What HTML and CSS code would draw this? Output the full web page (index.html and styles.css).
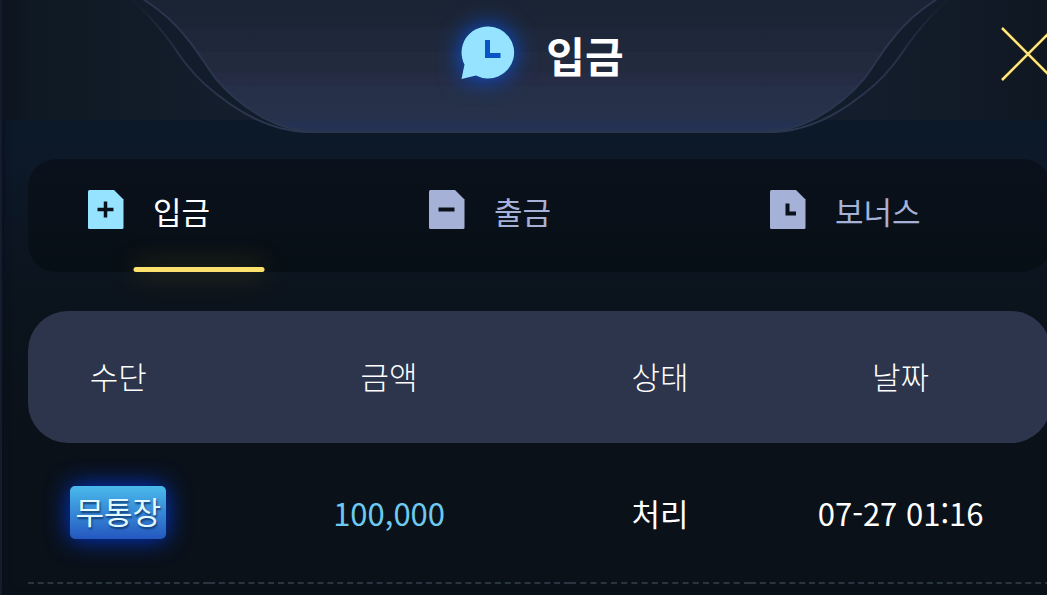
FILE: index.html
```html
<!DOCTYPE html>
<html lang="ko">
<head>
<meta charset="utf-8">
<title>입금</title>
<link rel="stylesheet" href="styles.css">
</head>
<body>
<main class="modal">
  <header class="modal-header">
    <svg class="header-plate" width="820" height="134" viewBox="0 0 820 134" aria-hidden="true">
      <defs>
        <linearGradient id="plate" x1="0" y1="0" x2="0" y2="134" gradientUnits="userSpaceOnUse">
          <stop offset="0" stop-color="#1b2435"/>
          <stop offset=".21" stop-color="#1c2536"/>
          <stop offset=".21" stop-color="#1e273a"/>
          <stop offset=".385" stop-color="#1f283b"/>
          <stop offset=".39" stop-color="#222a3e"/>
          <stop offset=".54" stop-color="#222a3e"/>
          <stop offset=".545" stop-color="#252b43"/>
          <stop offset=".64" stop-color="#252c45"/>
          <stop offset=".645" stop-color="#252f47"/>
          <stop offset=".78" stop-color="#263048"/>
          <stop offset=".785" stop-color="#273149"/>
          <stop offset=".89" stop-color="#27314b"/>
          <stop offset=".93" stop-color="#253154"/>
          <stop offset="1" stop-color="#273453"/>
        </linearGradient>
        <linearGradient id="rim" x1="0" y1="0" x2="0" y2="134" gradientUnits="userSpaceOnUse">
          <stop offset="0" stop-color="#253145" stop-opacity=".1"/>
          <stop offset=".4" stop-color="#253145"/>
          <stop offset="1" stop-color="#2b3852"/>
        </linearGradient>
      </defs>
      <path d="M0 -1C12 8 24 21 35 35C46 49 50 57 57 65C66 77 77 88 100 104C123 120 148 131 176 132H644C672 131 697 120 720 104C743 88 754 77 763 65C770 57 774 49 785 35C796 21 808 8 820 -1Z" fill="#131c2b" stroke="url(#rim)" stroke-width="2"/>
      <path d="M13 -1C30 10 44 22 55 36C69 52 77 68 86 79C98 93 114 107 134 118C151 127 166 131 184 132H636C654 131 669 127 686 118C706 107 722 93 734 79C743 68 751 52 765 36C776 22 790 10 807 -1Z" fill="url(#plate)" stroke="#29364e" stroke-width="2"/>
    </svg>
    <div class="title">
      <svg class="title-icon" width="54" height="54" viewBox="0 0 54 54" aria-hidden="true">
        <path d="M27.500 .5A26 26 0 1 1 15 49.500L.5 53L3.500 38.500A26 26 0 0 1 27.500 .5Z" fill="#96e3ff"/>
        <path d="M24 14H29V27H39.500V32H24Z" fill="#0755c4"/>
      </svg>
      <h1>입금</h1>
    </div>
    <button class="close" type="button" aria-label="닫기">
      <svg width="54" height="54" viewBox="0 0 54 54" aria-hidden="true">
        <path d="M1 1L53 53M53 1L1 53" stroke="#1b1b13" stroke-width="5"/>
        <path d="M1 1L53 53M53 1L1 53" stroke="#ffe680" stroke-width="2.500"/>
      </svg>
    </button>
  </header>
  <div class="modal-body">
    <nav class="tabs">
      <button class="tab active" type="button">
        <svg width="36" height="39" viewBox="0 0 36 39" aria-hidden="true">
          <path d="M1.500 0H26L35.500 9.500V37.500Q35.500 39 34 39H1.500Q0 39 0 37.500V1.500Q0 0 1.500 0Z" fill="currentColor"/>
          <path d="M9.500 19.500H25.500M17.500 11.500V27.500" stroke="#09111b" stroke-width="3.500"/>
        </svg>
        <span>입금</span>
      </button>
      <button class="tab" type="button">
        <svg width="36" height="39" viewBox="0 0 36 39" aria-hidden="true">
          <path d="M1.500 0H26L35.500 9.500V37.500Q35.500 39 34 39H1.500Q0 39 0 37.500V1.500Q0 0 1.500 0Z" fill="currentColor"/>
          <path d="M9.500 19.500H25.500" stroke="#09111b" stroke-width="4"/>
        </svg>
        <span>출금</span>
      </button>
      <button class="tab" type="button">
        <svg width="36" height="39" viewBox="0 0 36 39" aria-hidden="true">
          <path d="M1.500 0H26L35.500 9.500V37.500Q35.500 39 34 39H1.500Q0 39 0 37.500V1.500Q0 0 1.500 0Z" fill="currentColor"/>
          <path d="M17.500 13.500V23.500H26" fill="none" stroke="#09111b" stroke-width="4"/>
        </svg>
        <span>보너스</span>
      </button>
    </nav>
    <table class="history">
      <thead>
        <tr><th class="c3">수단</th><th class="c6">금액</th><th class="c3">상태</th><th class="c5">날짜</th></tr>
      </thead>
      <tbody>
        <tr><td><span class="badge">무통장</span></td><td class="amount">100,000</td><td>처리</td><td>07-27 01:16</td></tr>
      </tbody>
    </table>
  </div>
</main>
</body>
</html>
```
FILE: styles.css
```css
* { box-sizing: border-box; }

html, body {
  margin: 0;
  min-height: 100%;
  overflow: hidden;
  background: #0a1119;
}

body {
  font-family: "Noto Sans CJK KR", sans-serif;
  font-size: 31px;
  color: #fff;
}

button {
  border: 0;
  padding: 0;
  background: none;
  font: inherit;
  color: inherit;
  cursor: pointer;
}

.modal {
  margin-right: -32px;
  min-height: 100vh;
  box-shadow: inset 2px 0 #151c2d, inset 5px 0 6px #0a121e;
  background: linear-gradient(#0c1929 120px, #0d1929 155px, #0b131c 300px, #0a1119 450px);
}

.modal-header {
  position: relative;
  display: flex;
  justify-content: center;
  height: 120px;
  background: linear-gradient(90deg, #151c2d 2px, #0d141f 2px, #0f1923 30px, #131d2b 200px, #131d2b 880px, #0f1722 1050px);
}

.header-plate {
  position: absolute;
  top: 0;
  left: 50%;
  transform: translateX(-50%);
}

.title {
  position: relative;
  display: flex;
  align-items: flex-start;
  gap: 31px;
  padding: 26px 0 0 6px;
}

.title-icon {
  overflow: visible;
  filter: drop-shadow(0 0 12px #0755e8);
}

h1 {
  margin: 0;
  font-size: 42px;
  font-weight: 700;
  line-height: 58px;
}

.close {
  position: absolute;
  top: 27px;
  right: 24px;
  width: 54px;
  height: 54px;
}

.close svg { display: block; }

.modal-body { padding: 39px 28px 0; }

.tabs {
  display: grid;
  grid-template-columns: repeat(3, 1fr);
  height: 113px;
  margin-bottom: 39px;
  border-radius: 28px;
  background: linear-gradient(#0a111c, #070f16);
}

.tab {
  position: relative;
  display: flex;
  align-items: flex-start;
  gap: 29px;
  padding: 31px 0 0 60px;
  color: #a5b1d6;
  line-height: 42px;
}

.tab.active { color: #96e3ff; }
.tab.active span { color: #fff; }

.tab.active::after {
  content: "";
  position: absolute;
  bottom: 0;
  left: 50%;
  width: 131px;
  height: 5px;
  border-radius: 3px;
  background: #ffe26e;
  box-shadow: 0 0 28px #ffc80060;
  transform: translateX(-50%);
}

.history {
  width: 100%;
  table-layout: fixed;
  border-spacing: 0;
  text-align: center;
}

.c3 { width: 17.65%; }
.c6 { width: 35.3%; }
.c5 { width: 29.4%; }

th {
  height: 132px;
  padding: 0 0 4px;
  background: #2c354c;
  font-weight: 300;
}

th:first-child { border-radius: 40px 0 0 40px; }
th:last-child { border-radius: 0 40px 40px 0; }

td {
  height: 141px;
  padding: 0;
  border-bottom: 2px dashed #2b3540;
}

.amount { color: #6dc9f0; }

.badge {
  display: inline-block;
  padding: 0 5px 4px;
  border-radius: 5px;
  background: linear-gradient(#4abaec, #2457c0);
  box-shadow: 0 0 24px #0038d8;
  color: #e2faff;
  line-height: 49px;
  text-shadow: 1px 2px 2px #123a70;
}
```
